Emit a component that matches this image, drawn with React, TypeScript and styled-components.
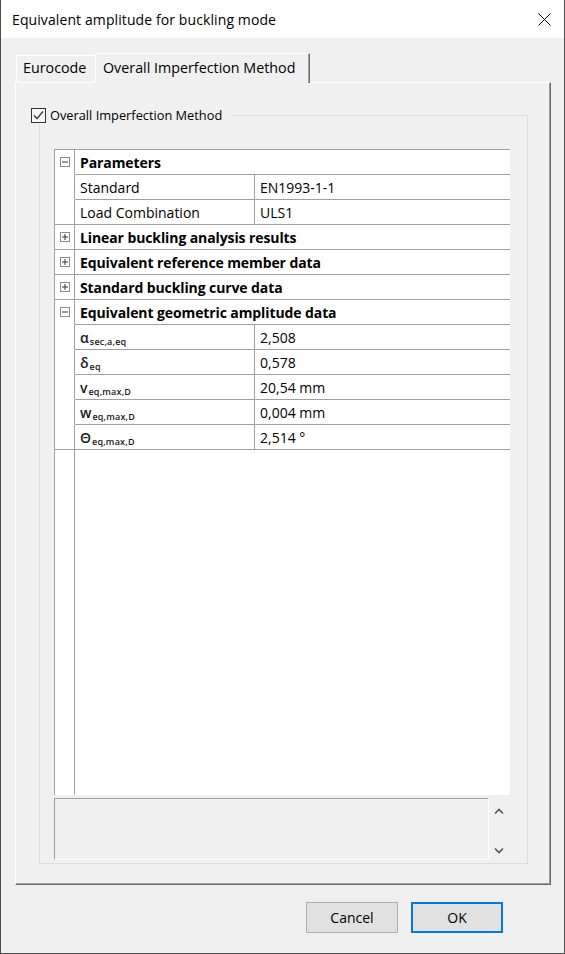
import React from 'react';
import styled, { createGlobalStyle } from 'styled-components';

const Global = createGlobalStyle`
  html, body { margin: 0; padding: 0; background: #f0f0f0; }
  body { font-family: "Open Sans", "Noto Sans", sans-serif; color: #000; }
  * { box-sizing: border-box; }
`;

const Window = styled.div`
  width: 565px;
  height: 954px;
  border: 1px solid #4d4d4d;
  border-top: none;
  background: #f0f0f0;
  display: flex;
  flex-direction: column;
`;

const TitleBar = styled.div`
  height: 38px;
  flex: none;
  background: #fff;
  display: flex;
  align-items: center;
  justify-content: space-between;
  padding-left: 11px;
`;

const TitleText = styled.span`
  font-size: 14px;
  letter-spacing: 0.1px;
`;

const CloseButton = styled.div`
  width: 40px;
  height: 38px;
  display: flex;
  align-items: center;
  justify-content: center;
`;

const Body = styled.div`
  flex: 1;
  display: flex;
  flex-direction: column;
  padding: 15px 13px 0 14px;
`;

const TabStrip = styled.div`
  height: 29px;
  display: flex;
  align-items: flex-end;
  padding-left: 1px;
  position: relative;
  z-index: 1;
`;

const Tab = styled.div<{ $active?: boolean }>`
  height: ${p => (p.$active ? 30 : 27)}px;
  margin-bottom: ${p => (p.$active ? -1 : 0)}px;
  width: ${p => (p.$active ? 215 : 79)}px;
  background: #f0f0f0;
  border-top: 1px solid #fff;
  border-left: 1px solid #fff;
  border-right: ${p => (p.$active ? '1px solid #696969' : 'none')};
  box-shadow: ${p => (p.$active ? 'inset -1px 0 0 #a0a0a0' : 'none')};
  font-size: 14.3px;
  padding-left: ${p => (p.$active ? 7 : 6)}px;
  padding-top: ${p => (p.$active ? 3 : 1)}px;
  line-height: 22px;
  color: #000;
  white-space: nowrap;
`;

const TabPanel = styled.div`
  height: 803px;
  border-top: 1px solid #fff;
  border-left: 1px solid #fff;
  border-right: 1px solid #696969;
  border-bottom: 1px solid #696969;
  box-shadow: inset -1px -1px 0 #a0a0a0;
  padding: 32px 22px 20px 23px;
  display: flex;
  flex-direction: column;
`;

const GroupFrame = styled.div`
  flex: 1;
  position: relative;
  border: 1px solid #dcdcdc;
  padding: 33px 17px 2px 14px;
  display: flex;
  flex-direction: column;
  gap: 3px;
`;

const GroupLegend = styled.label`
  position: absolute;
  top: -9px;
  left: -9px;
  display: flex;
  align-items: center;
  gap: 4px;
  padding-right: 9px;
  background: #f0f0f0;
  font-size: 12.8px;
  line-height: 17px;
`;

const CheckBox = styled.span`
  width: 15px;
  height: 15px;
  border: 1px solid #333;
  background: #f6f6f6;
  display: flex;
  align-items: center;
  justify-content: center;
`;

const Grid = styled.div`
  height: 646px;
  flex: none;
  background: #fff;
  border-top: 1px solid #a0a0a0;
  border-left: 1px solid #a0a0a0;
  display: flex;
  flex-direction: column;
  font-size: 14px;
`;

const Row = styled.div`
  height: 25px;
  display: grid;
  grid-template-columns: 20px 180px 1fr;
  flex: none;
`;

const Gutter = styled.div<{ $line?: boolean }>`
  border-right: 1px solid #a0a0a0;
  border-bottom: 1px solid ${p => (p.$line ? '#a0a0a0' : 'transparent')};
  display: flex;
  align-items: center;
  justify-content: center;
  padding-left: 1px;
`;

const CategoryCell = styled.div`
  grid-column: 2 / 4;
  border-bottom: 1px solid #a0a0a0;
  font-weight: 700;
  padding-left: 5px;
  display: flex;
  align-items: center;
  color: #000;
  letter-spacing: -0.1px;
`;

const NameCell = styled.div`
  border-right: 1px solid #a0a0a0;
  border-bottom: 1px solid #a0a0a0;
  padding-left: 5px;
  display: flex;
  align-items: center;
  white-space: nowrap;
`;

const ValueCell = styled.div`
  border-bottom: 1px solid #a0a0a0;
  padding-left: 5px;
  display: flex;
  align-items: center;
  white-space: nowrap;
`;

const Filler = styled.div`
  flex: 1;
  display: grid;
  grid-template-columns: 20px 1fr;
`;

const ExpandBox = styled.span`
  width: 10px;
  height: 10px;
  border: 1px solid #8c8c8c;
  background: #fff;
  display: flex;
  align-items: center;
  justify-content: center;
`;

const Sym = styled.span`
  font-weight: 600;
  font-size: 14px;
  color: #1a1a1a;
  display: inline-flex;
  align-items: baseline;
`;

const Sub = styled.span`
  font-size: 9px;
  font-weight: 600;
  position: relative;
  top: 2px;
  margin-left: 1px;
  letter-spacing: 0.2px;
`;

const DescRow = styled.div`
  height: 62px;
  flex: none;
  display: flex;
`;

const DescBox = styled.div`
  width: 435px;
  border-top: 1px solid #a0a0a0;
  border-left: 1px solid #a0a0a0;
  border-right: 1px solid #fff;
  border-bottom: 1px solid #fff;
  background: #f0f0f0;
`;

const ScrollCol = styled.div`
  width: 20px;
  display: flex;
  flex-direction: column;
  align-items: center;
  justify-content: space-between;
  padding: 10px 0 6px;
`;

const ButtonRow = styled.div`
  display: flex;
  justify-content: flex-end;
  gap: 13px;
  margin-top: 17px;
  padding-right: 48px;
`;

const Button = styled.button<{ $default?: boolean }>`
  width: 92px;
  height: 31px;
  background: #e1e1e1;
  border: ${p => (p.$default ? '2px solid #0078d7' : '1px solid #adadad')};
  font-family: "Open Sans", "Noto Sans", sans-serif;
  font-size: 14px;
  color: #000;
  padding: 0;
`;

const Expander = ({ open }: { open: boolean }) => (
  <ExpandBox>
    <svg width="8" height="8" viewBox="0 0 8 8">
      <path d="M1 4h6" stroke="#333" strokeWidth="1" />
      {!open && <path d="M4 1v6" stroke="#333" strokeWidth="1" />}
    </svg>
  </ExpandBox>
);

const Category = ({ title, open, endLine }: { title: string; open: boolean; endLine: boolean }) => (
  <Row>
    <Gutter $line={endLine}>
      <Expander open={open} />
    </Gutter>
    <CategoryCell>{title}</CategoryCell>
  </Row>
);

const Prop = ({ name, value, last }: { name: React.ReactNode; value: string; last?: boolean }) => (
  <Row>
    <Gutter $line={last} />
    <NameCell>{name}</NameCell>
    <ValueCell>{value}</ValueCell>
  </Row>
);

const S = ({ main, sub }: { main: string; sub: string }) => (
  <Sym>
    {main}
    <Sub>{sub}</Sub>
  </Sym>
);

export default function App() {
  return (
    <>
      <Global />
      <Window>
        <TitleBar>
          <TitleText>Equivalent amplitude for buckling mode</TitleText>
          <CloseButton>
            <svg width="13" height="13" viewBox="0 0 13 13">
              <path d="M0.5 0.5L12.5 12.5M12.5 0.5L0.5 12.5" stroke="#000" strokeWidth="1" />
            </svg>
          </CloseButton>
        </TitleBar>
        <Body>
          <TabStrip>
            <Tab>Eurocode</Tab>
            <Tab $active>Overall Imperfection Method</Tab>
          </TabStrip>
          <TabPanel>
            <GroupFrame>
              <GroupLegend>
                <CheckBox>
                  <svg width="13" height="13" viewBox="0 0 13 13">
                    <path d="M2 6.5L5 9.5L11 2.5" stroke="#333" strokeWidth="1.2" fill="none" />
                  </svg>
                </CheckBox>
                Overall Imperfection Method
              </GroupLegend>
              <Grid>
                <Category title="Parameters" open endLine={false} />
                <Prop name="Standard" value="EN1993-1-1" />
                <Prop name="Load Combination" value="ULS1" last />
                <Category title="Linear buckling analysis results" open={false} endLine />
                <Category title="Equivalent reference member data" open={false} endLine />
                <Category title="Standard buckling curve data" open={false} endLine />
                <Category title="Equivalent geometric amplitude data" open endLine={false} />
                <Prop name={<S main="α" sub="sec,a,eq" />} value="2,508" />
                <Prop name={<S main="δ" sub="eq" />} value="0,578" />
                <Prop name={<S main="v" sub="eq,max,D" />} value="20,54 mm" />
                <Prop name={<S main="w" sub="eq,max,D" />} value="0,004 mm" />
                <Prop name={<S main="Θ" sub="eq,max,D" />} value="2,514 °" last />
                <Filler>
                  <Gutter />
                </Filler>
              </Grid>
              <DescRow>
                <DescBox />
                <ScrollCol>
                  <svg width="10" height="7" viewBox="0 0 10 7">
                    <path d="M1 5.5L5 1.5L9 5.5" stroke="#555" strokeWidth="1.6" fill="none" />
                  </svg>
                  <svg width="10" height="7" viewBox="0 0 10 7">
                    <path d="M1 1.5L5 5.5L9 1.5" stroke="#555" strokeWidth="1.6" fill="none" />
                  </svg>
                </ScrollCol>
              </DescRow>
            </GroupFrame>
          </TabPanel>
          <ButtonRow>
            <Button>Cancel</Button>
            <Button $default>OK</Button>
          </ButtonRow>
        </Body>
      </Window>
    </>
  );
}
